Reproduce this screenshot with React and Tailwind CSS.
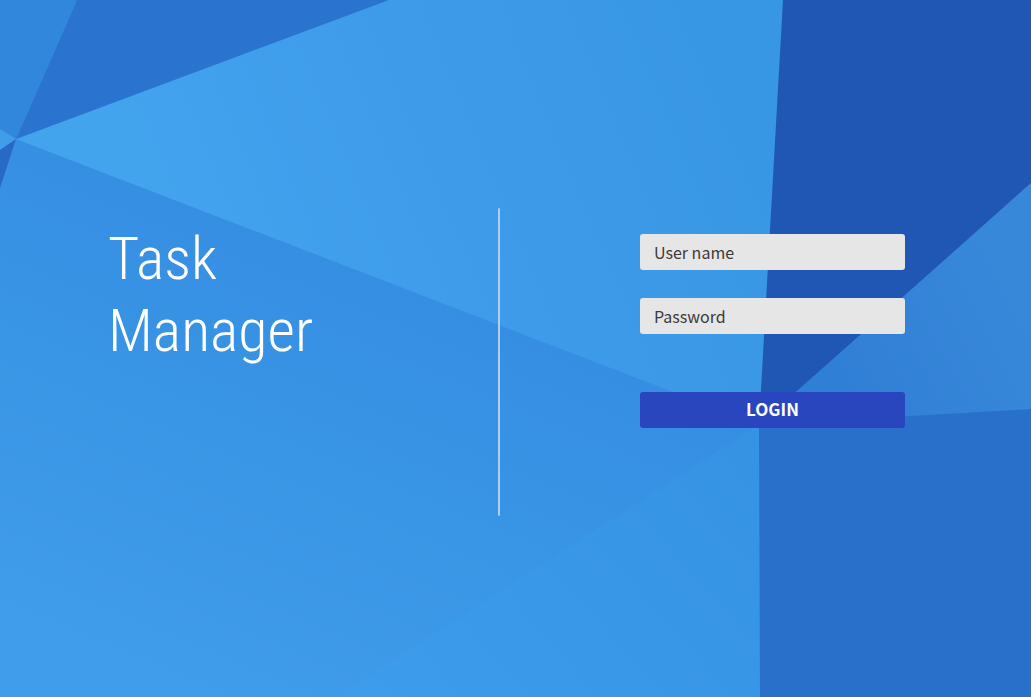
function Backdrop() {
  return (
    <svg
      className="absolute inset-0 -z-10 h-full w-full"
      viewBox="0 0 1031 697"
      preserveAspectRatio="none"
      aria-hidden="true"
    >
      <defs>
        <linearGradient id="top" gradientUnits="userSpaceOnUse" x1="150" y1="230" x2="700" y2="0">
          <stop offset="0" stopColor="#43a4ee" />
          <stop offset="0.5" stopColor="#3e9bea" />
          <stop offset="1" stopColor="#3897e5" />
        </linearGradient>
        <linearGradient id="lower" gradientUnits="userSpaceOnUse" x1="430" y1="290" x2="250" y2="720">
          <stop offset="0" stopColor="#368ee3" />
          <stop offset="0.45" stopColor="#3995e5" />
          <stop offset="1" stopColor="#409deb" />
        </linearGradient>
        <linearGradient id="base" gradientUnits="userSpaceOnUse" x1="740" y1="440" x2="400" y2="740">
          <stop offset="0" stopColor="#3693e4" />
          <stop offset="1" stopColor="#3d9ceb" />
        </linearGradient>
        <linearGradient id="right" gradientUnits="userSpaceOnUse" x1="840" y1="390" x2="1031" y2="290">
          <stop offset="0" stopColor="#307fd6" />
          <stop offset="1" stopColor="#3888da" />
        </linearGradient>
      </defs>
      <rect width="1031" height="697" fill="url(#lower)" />
      <polygon points="388,0 784,0 759,425 16,139" fill="url(#top)" />
      <polygon points="77,0 389,0 16,139" fill="#2a74cf" />
      <polygon points="0,0 77,0 16,139 0,129" fill="#3087db" />
      <polygon points="0,129 16,139 0,150" fill="#409de9" />
      <polygon points="0,150 16,139 0,188" fill="#2869c5" />
      <polygon points="759,425 761,697 336,697" fill="url(#base)" />
      <polygon points="783,0 1031,0 1031,184 759,425" fill="#2057b4" />
      <polygon points="1031,183 1031,410 759,425" fill="url(#right)" />
      <polygon points="759,425 1031,409 1031,697 760,697" fill="#2970ca" />
    </svg>
  );
}

const fieldClass =
  "block h-9 w-full rounded-[3px] bg-[#e6e6e6] px-3.5 text-base text-[#3b3b3b] outline-none placeholder:text-[#3b3b3b] focus:ring-2 focus:ring-white";

export default function App() {
  return (
    <main className="relative isolate grid min-h-screen grid-cols-[498fr_2px_531fr] items-start overflow-hidden pt-52 font-['Noto_Sans_CJK_SC','Open_Sans',sans-serif]">
      <Backdrop />
      <h1 className="pt-[15px] pl-[108px] font-['Roboto_Condensed',Roboto,sans-serif] text-[60px] leading-[72px] font-light text-white">
        Task
        <br />
        Manager
      </h1>
      <div className="h-[308px] rounded-full bg-[#b1cdeb]" />
      <form className="w-full max-w-[405px] pt-[26px] pl-[140px]" onSubmit={(e) => e.preventDefault()}>
        <input type="text" aria-label="User name" placeholder="User name" autoComplete="username" className={fieldClass} />
        <input type="password" aria-label="Password" placeholder="Password" autoComplete="current-password" className={`mt-7 ${fieldClass}`} />
        <button type="submit" className="mt-[58px] block h-9 w-full rounded-[3px] bg-[#2946be] pb-0.5 text-[17px] font-bold text-white">
          LOGIN
        </button>
      </form>
    </main>
  );
}
